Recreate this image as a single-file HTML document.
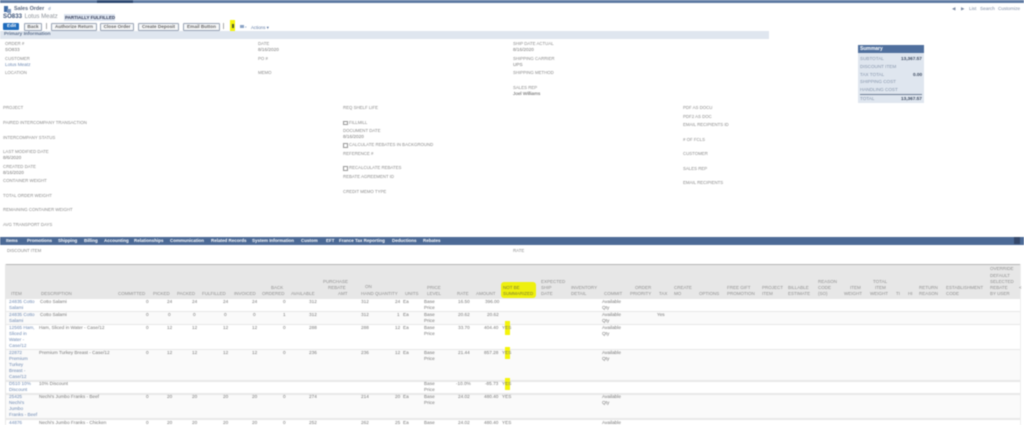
<!DOCTYPE html>
<html><head><meta charset="utf-8"><title>Sales Order</title>
<style>
html,body{margin:0;padding:0;background:#fff}
body{width:1024px;height:425px;overflow:hidden;position:relative;font-family:"Liberation Sans",sans-serif}
#w{position:absolute;left:0;top:0;width:1024px;height:425px;overflow:hidden;filter:blur(.4px)}
span{position:absolute;white-space:nowrap;font-size:4.35px;line-height:6px;color:#8a8a8a}
div.b{position:absolute}
.v{color:#777;font-size:4.7px}
.d{color:#555;font-size:4.7px}
.a{color:#6f8ab3;font-size:4.7px}
.t{color:#fff;font-weight:bold;top:238px;font-size:4.5px;text-decoration:none}
.h{color:#909090;font-size:4.5px}
.btn{position:absolute;top:23px;height:5.5px;border:.8px solid #98a3b5;border-radius:1px;background:#f6f7f8;color:#666;text-align:center;font-size:4.7px;line-height:5.5px;font-weight:bold}
.s{font-size:4.6px;color:#8796ac}
.sv{font-size:4.7px;color:#3d4a60;font-weight:bold}
.c{position:absolute;width:2.6px;height:2.6px;border:.5px solid #999;background:#fff}
</style></head><body><div id="w">
<div class="b" style="left:0;top:0;width:1024px;height:3px;background:#5f7ba3"></div>
<div class="b" style="left:97px;top:0;width:36px;height:3px;background:#2f4a73"></div>

<div class="b" style="left:4px;top:6px;width:4px;height:6px;background:#3f6ba5"></div>
<div class="b" style="left:7px;top:9px;width:4px;height:4px;background:#7c98bf"></div>
<span style="left:14px;top:6px;font-size:5.4px;font-weight:bold;color:#5a6880">Sales Order</span>
<span style="left:48px;top:5.5px;font-size:4.6px;color:#7d93b3">&#9740;</span>
<span style="left:3px;top:14px;font-size:6.1px;color:#3b5278;font-weight:bold">SO833</span>
<span style="left:24.5px;top:14px;font-size:6.1px;color:#8f949b">Lotus Meatz</span>
<div class="b" style="left:64px;top:14px;width:51px;height:7px;background:#dbe3ef"></div>
<span style="left:65px;top:14.5px;font-size:4.5px;font-weight:bold;color:#333a55">PARTIALLY FULFILLED</span>

<div class="b" style="left:3px;top:23px;width:16px;height:7px;background:#1f6cbd;border-radius:1px"></div>
<span style="left:7px;top:23.5px;font-size:4.8px;font-weight:bold;color:#fff">Edit</span>
<div class="btn" style="left:24px;width:16px">Back</div>
<div class="b" style="left:46px;top:23px;width:1px;height:6px;background:#aaa"></div>
<div class="btn" style="left:51px;width:44px">Authorize Return</div>
<div class="btn" style="left:100px;width:32px">Close Order</div>
<div class="btn" style="left:138px;width:39px">Create Deposit</div>
<div class="btn" style="left:183px;width:35px">Email Button</div>
<div class="b" style="left:223px;top:23px;width:1px;height:6px;background:#aaa"></div>
<div class="b" style="left:230px;top:20px;width:5px;height:11px;background:#f4f40a"></div>
<div class="b" style="left:231.5px;top:24px;width:2.5px;height:4px;background:#4a5a30"></div>
<div class="b" style="left:240px;top:25px;width:4px;height:3px;background:#8ba3c5"></div>
<span style="left:245px;top:24px;color:#8ba3c5;font-size:3px">&#9662;</span>
<span style="left:251px;top:24.5px;font-size:4.4px;color:#5f7aa5">Actions &#9662;</span>

<span style="left:952px;top:5.5px;color:#7b8aa3">&#9664;</span>
<span style="left:961px;top:5.5px;color:#7b8aa3">&#9654;</span>
<span style="left:969px;top:6px;color:#7b8aa3;font-size:4.7px">List</span>
<span style="left:980px;top:6px;color:#7b8aa3;font-size:4.7px">Search</span>
<span style="left:998px;top:6px;color:#7b8aa3;font-size:4.7px">Customize</span>

<div class="b" style="left:0;top:31px;width:769px;height:8px;background:#dfe6ef"></div>
<span style="left:4px;top:32px;font-size:4.9px;font-weight:bold;color:#5d6f8c">Primary Information</span>

<span style="left:5px;top:41px">ORDER #</span>
<span class="v" style="left:5px;top:47px">SO833</span>
<span style="left:5px;top:56px">CUSTOMER</span>
<span class="a" style="left:5px;top:62px">Lotus Meatz</span>
<span style="left:5px;top:70px">LOCATION</span>
<span style="left:258px;top:41px">DATE</span>
<span class="v" style="left:258px;top:47px">8/16/2020</span>
<span style="left:258px;top:56px">PO #</span>
<span style="left:258px;top:70px">MEMO</span>
<span style="left:513px;top:41px">SHIP DATE  ACTUAL</span>
<span class="v" style="left:513px;top:47px">8/16/2020</span>
<span style="left:513px;top:56px">SHIPPING CARRIER</span>
<span class="v" style="left:513px;top:62px">UPS</span>
<span style="left:513px;top:70px">SHIPPING METHOD</span>
<span style="left:513px;top:85px">SALES REP</span>
<span class="d" style="left:513px;top:91px">Joel Williams</span>

<div class="b" style="left:858px;top:45px;width:66px;height:8px;background:#4f6f9d"></div>
<div class="b" style="left:858px;top:53px;width:66px;height:50px;background:#dfe6ef"></div>
<div class="b" style="left:860px;top:94px;width:62px;height:1px;background:#6f7f96"></div>
<span style="left:860px;top:46px;font-size:5px;font-weight:bold;color:#fff">Summary</span>
<span class="s" style="left:860px;top:56px">SUBTOTAL</span>
<span class="sv" style="left:901px;top:56px">13,367.57</span>
<span class="s" style="left:860px;top:64px">DISCOUNT ITEM</span>
<span class="s" style="left:860px;top:72px">TAX TOTAL</span>
<span class="sv" style="left:913px;top:72px">0.00</span>
<span class="s" style="left:860px;top:79px">SHIPPING COST</span>
<span class="s" style="left:860px;top:87px">HANDLING COST</span>
<span class="s" style="left:860px;top:96px">TOTAL</span>
<span class="sv" style="left:901px;top:96px">13,367.57</span>

<span style="left:3px;top:105px">PROJECT</span>
<span style="left:3px;top:120px">PAIRED INTERCOMPANY TRANSACTION</span>
<span style="left:3px;top:134.5px">INTERCOMPANY STATUS</span>
<span style="left:3px;top:149px">LAST MODIFIED DATE</span>
<span class="v" style="left:3px;top:155px">8/6/2020</span>
<span style="left:3px;top:164px">CREATED DATE</span>
<span class="v" style="left:3px;top:170px">8/16/2020</span>
<span style="left:3px;top:178px">CONTAINER WEIGHT</span>
<span style="left:3px;top:193px">TOTAL ORDER WEIGHT</span>
<span style="left:3px;top:207px">REMAINING CONTAINER WEIGHT</span>
<span style="left:3px;top:221.5px">AVG TRANSPORT DAYS</span>

<span style="left:343px;top:105px">REQ SHELF LIFE</span>
<div class="c" style="left:343px;top:120.5px"></div>
<span style="left:349px;top:120px">FILLMILL</span>
<span style="left:343px;top:128px">DOCUMENT DATE</span>
<span class="v" style="left:343px;top:134px">8/16/2020</span>
<div class="c" style="left:343px;top:143px"></div>
<span style="left:349px;top:142px">CALCULATE REBATES IN BACKGROUND</span>
<span style="left:343px;top:151px">REFERENCE #</span>
<div class="c" style="left:343px;top:166px"></div>
<span style="left:349px;top:165px">RECALCULATE REBATES</span>
<span style="left:343px;top:174px">REBATE AGREEMENT ID</span>
<span style="left:343px;top:189px">CREDIT MEMO TYPE</span>

<span style="left:683px;top:105px">PDF AS DOCU</span>
<span style="left:683px;top:114px">PDF2 AS DOC</span>
<span style="left:683px;top:122px">EMAIL RECIPIENTS ID</span>
<span style="left:683px;top:137px"># OF FCLS</span>
<span style="left:683px;top:151px">CUSTOMER</span>
<span style="left:683px;top:165.5px">SALES REP</span>
<span style="left:683px;top:180px">EMAIL RECIPIENTS</span>

<div class="b" style="left:0;top:237px;width:1024px;height:7.5px;background:#4c6a96"></div>
<div class="b" style="left:1014px;top:237px;width:6px;height:7px;background:#35486a"></div>
<span class="t" style="left:6px">Items</span>
<span class="t" style="left:27px">Promotions</span>
<span class="t" style="left:58px">Shipping</span>
<span class="t" style="left:84px">Billing</span>
<span class="t" style="left:104px">Accounting</span>
<span class="t" style="left:134px">Relationships</span>
<span class="t" style="left:170px">Communication</span>
<span class="t" style="left:211px">Related Records</span>
<span class="t" style="left:252px">System Information</span>
<span class="t" style="left:301px">Custom</span>
<span class="t" style="left:326px">EFT</span>
<span class="t" style="left:339px">France Tax Reporting</span>
<span class="t" style="left:392px">Deductions</span>
<span class="t" style="left:423px">Rebates</span>

<span style="left:7px;top:248px">DISCOUNT ITEM</span>
<span style="left:513px;top:248px">RATE</span>

<div class="b" style="left:6px;top:264px;width:1014px;height:1.5px;background:#b5b5b5"></div>
<div class="b" style="left:6px;top:265px;width:1014px;height:34px;background:#e7e7e7"></div>
<div class="b" style="left:5px;top:264px;width:1px;height:161px;background:#e8e8e8"></div>
<div class="b" style="left:1020px;top:264px;width:1px;height:161px;background:#eee"></div>
<div class="b" style="left:6px;top:311px;width:1014px;height:1px;background:#e8e8e8"></div>
<div class="b" style="left:6px;top:312px;width:1014px;height:12px;background:#fafafa"></div>
<div class="b" style="left:6px;top:324px;width:1014px;height:1px;background:#e8e8e8"></div>
<div class="b" style="left:6px;top:349px;width:1014px;height:1px;background:#e8e8e8"></div>
<div class="b" style="left:6px;top:350px;width:1014px;height:30px;background:#fafafa"></div>
<div class="b" style="left:6px;top:380px;width:1014px;height:2px;background:#e8e8e8"></div>
<div class="b" style="left:6px;top:393px;width:1014px;height:2px;background:#e8e8e8"></div>
<div class="b" style="left:6px;top:395px;width:1014px;height:23px;background:#fafafa"></div>
<div class="b" style="left:6px;top:418px;width:1014px;height:2px;background:#e8e8e8"></div>

<div class="b" style="left:501px;top:282px;width:35px;height:16px;background:#eef00e;border-radius:3px"></div>
<div class="b" style="left:505px;top:321px;width:5px;height:14px;background:#f4f40a"></div>
<div class="b" style="left:505px;top:347px;width:5px;height:12px;background:#f4f40a"></div>
<div class="b" style="left:505px;top:378px;width:5px;height:12px;background:#f4f40a"></div>

<span class="h" style="left:11px;top:291px">ITEM</span>
<span class="h" style="left:41px;top:291px">DESCRIPTION</span>
<span class="h" style="left:118px;top:291px">COMMITTED</span>
<span class="h" style="left:153px;top:291px">PICKED</span>
<span class="h" style="left:177px;top:291px">PACKED</span>
<span class="h" style="left:202px;top:291px">FULFILLED</span>
<span class="h" style="left:234px;top:291px">INVOICED</span>
<span class="h" style="left:271px;top:285px">BACK</span>
<span class="h" style="left:262px;top:291px">ORDERED</span>
<span class="h" style="left:291px;top:291px">AVAILABLE</span>
<span class="h" style="left:323px;top:278.5px">PURCHASE</span>
<span class="h" style="left:328px;top:285px">REBATE</span>
<span class="h" style="left:338px;top:291px">AMT</span>
<span class="h" style="left:365px;top:284px">ON</span>
<span class="h" style="left:361px;top:291px">HAND</span>
<span class="h" style="left:375px;top:291px">QUANTITY</span>
<span class="h" style="left:405px;top:291px">UNITS</span>
<span class="h" style="left:427px;top:285px">PRICE</span>
<span class="h" style="left:427px;top:291px">LEVEL</span>
<span class="h" style="left:457px;top:291px">RATE</span>
<span class="h" style="left:476px;top:291px">AMOUNT</span>
<span class="h" style="left:503px;top:285px;color:#7d7d30">NOT BE</span>
<span class="h" style="left:503px;top:291px;color:#7d7d30">SUMMARIZED</span>
<span class="h" style="left:541px;top:278.5px">EXPECTED</span>
<span class="h" style="left:541px;top:285px">SHIP</span>
<span class="h" style="left:541px;top:291px">DATE</span>
<span class="h" style="left:571px;top:285px">INVENTORY</span>
<span class="h" style="left:571px;top:291px">DETAIL</span>
<span class="h" style="left:604px;top:291px">COMMIT</span>
<span class="h" style="left:635px;top:285px">ORDER</span>
<span class="h" style="left:630px;top:291px">PRIORITY</span>
<span class="h" style="left:659px;top:291px">TAX</span>
<span class="h" style="left:674px;top:285px">CREATE</span>
<span class="h" style="left:674px;top:291px">MO</span>
<span class="h" style="left:699px;top:291px">OPTIONS</span>
<span class="h" style="left:727px;top:285px">FREE GIFT</span>
<span class="h" style="left:727px;top:291px">PROMOTION</span>
<span class="h" style="left:762px;top:285px">PROJECT</span>
<span class="h" style="left:762px;top:291px">ITEM</span>
<span class="h" style="left:788px;top:285px">BILLABLE</span>
<span class="h" style="left:788px;top:291px">ESTIMATE</span>
<span class="h" style="left:818px;top:279px">REASON</span>
<span class="h" style="left:818px;top:285px">CODE</span>
<span class="h" style="left:818px;top:291px">(SO)</span>
<span class="h" style="left:850px;top:285px">ITEM</span>
<span class="h" style="left:844px;top:291px">WEIGHT</span>
<span class="h" style="left:873px;top:279px">TOTAL</span>
<span class="h" style="left:875px;top:285px">ITEM</span>
<span class="h" style="left:870px;top:291px">WEIGHT</span>
<span class="h" style="left:896px;top:291px">TI</span>
<span class="h" style="left:908px;top:291px">HI</span>
<span class="h" style="left:919px;top:285px">RETURN</span>
<span class="h" style="left:919px;top:291px">REASON</span>
<span class="h" style="left:946px;top:285px">ESTABLISHMENT</span>
<span class="h" style="left:946px;top:291px">CODE</span>
<span class="h" style="left:990px;top:266px">OVERRIDE</span>
<span class="h" style="left:990px;top:272.5px">DEFAULT</span>
<span class="h" style="left:990px;top:279px">SELECTED</span>
<span class="h" style="left:990px;top:285px">REBATE</span>
<span class="h" style="left:990px;top:291px">BY USER</span>
<span class="h" style="left:1019px;top:285px">&lt;</span>

<span class="a" style="left:9px;top:299px">24835 Cotto</span>
<span class="a" style="left:9px;top:305px">Salami</span>
<span class="v" style="left:40px;top:299px">Cotto Salami</span>
<span class="v" style="left:146px;top:299px">0</span>
<span class="v" style="left:167px;top:299px">24</span>
<span class="v" style="left:192px;top:299px">24</span>
<span class="v" style="left:223px;top:299px">24</span>
<span class="v" style="left:252px;top:299px">24</span>
<span class="v" style="left:283px;top:299px">0</span>
<span class="v" style="left:309px;top:299px">312</span>
<span class="v" style="left:361px;top:299px">312</span>
<span class="v" style="left:395px;top:299px">24</span>
<span class="v" style="left:403px;top:299px">Ea</span>
<span class="v" style="left:424px;top:299px">Base</span>
<span class="v" style="left:424px;top:305px">Price</span>
<span class="v" style="left:458px;top:299px">16.50</span>
<span class="v" style="left:485px;top:299px">396.00</span>
<span class="v" style="left:602px;top:299px">Available</span>
<span class="v" style="left:602px;top:305px">Qty</span>

<span class="a" style="left:9px;top:312px">24835 Cotto</span>
<span class="a" style="left:9px;top:318px">Salami</span>
<span class="v" style="left:40px;top:312px">Cotto Salami</span>
<span class="v" style="left:146px;top:312px">0</span>
<span class="v" style="left:168px;top:312px">0</span>
<span class="v" style="left:193px;top:312px">0</span>
<span class="v" style="left:224px;top:312px">0</span>
<span class="v" style="left:253px;top:312px">0</span>
<span class="v" style="left:283px;top:312px">1</span>
<span class="v" style="left:309px;top:312px">312</span>
<span class="v" style="left:361px;top:312px">312</span>
<span class="v" style="left:397px;top:312px">1</span>
<span class="v" style="left:403px;top:312px">Ea</span>
<span class="v" style="left:424px;top:312px">Base</span>
<span class="v" style="left:424px;top:318px">Price</span>
<span class="v" style="left:458px;top:312px">20.62</span>
<span class="v" style="left:487px;top:312px">20.62</span>
<span class="v" style="left:602px;top:312px">Available</span>
<span class="v" style="left:602px;top:318px">Qty</span>
<span class="v" style="left:657px;top:312px">Yes</span>

<span class="a" style="left:9px;top:325px">12565 Ham,</span>
<span class="a" style="left:9px;top:331px">Sliced in</span>
<span class="a" style="left:9px;top:337px">Water -</span>
<span class="a" style="left:9px;top:343px">Case/12</span>
<span class="v" style="left:39px;top:325px">Ham, Sliced in Water - Case/12</span>
<span class="v" style="left:146px;top:325px">0</span>
<span class="v" style="left:167px;top:325px">12</span>
<span class="v" style="left:192px;top:325px">12</span>
<span class="v" style="left:223px;top:325px">12</span>
<span class="v" style="left:252px;top:325px">12</span>
<span class="v" style="left:283px;top:325px">0</span>
<span class="v" style="left:309px;top:325px">288</span>
<span class="v" style="left:361px;top:325px">288</span>
<span class="v" style="left:395px;top:325px">12</span>
<span class="v" style="left:403px;top:325px">Ea</span>
<span class="v" style="left:424px;top:325px">Base</span>
<span class="v" style="left:424px;top:331px">Price</span>
<span class="v" style="left:458px;top:325px">33.70</span>
<span class="v" style="left:484px;top:325px">404.40</span>
<span class="v" style="left:502px;top:325px">YES</span>
<span class="v" style="left:602px;top:325px">Available</span>
<span class="v" style="left:602px;top:331px">Qty</span>

<span class="a" style="left:9px;top:350px">22872</span>
<span class="a" style="left:9px;top:356px">Premium</span>
<span class="a" style="left:9px;top:362px">Turkey</span>
<span class="a" style="left:9px;top:368px">Breast -</span>
<span class="a" style="left:9px;top:374px">Case/12</span>
<span class="v" style="left:39px;top:350px">Premium Turkey Breast - Case/12</span>
<span class="v" style="left:146px;top:350px">0</span>
<span class="v" style="left:167px;top:350px">12</span>
<span class="v" style="left:192px;top:350px">12</span>
<span class="v" style="left:223px;top:350px">12</span>
<span class="v" style="left:252px;top:350px">12</span>
<span class="v" style="left:283px;top:350px">0</span>
<span class="v" style="left:309px;top:350px">236</span>
<span class="v" style="left:361px;top:350px">236</span>
<span class="v" style="left:395px;top:350px">12</span>
<span class="v" style="left:403px;top:350px">Ea</span>
<span class="v" style="left:424px;top:350px">Base</span>
<span class="v" style="left:424px;top:356px">Price</span>
<span class="v" style="left:458px;top:350px">21.44</span>
<span class="v" style="left:484px;top:350px">857.28</span>
<span class="v" style="left:502px;top:350px">YES</span>
<span class="v" style="left:602px;top:350px">Available</span>
<span class="v" style="left:602px;top:356px">Qty</span>

<span class="a" style="left:9px;top:381px">D510 10%</span>
<span class="a" style="left:9px;top:387px">Discount</span>
<span class="v" style="left:39px;top:381px">10% Discount</span>
<span class="v" style="left:424px;top:381px">Base</span>
<span class="v" style="left:424px;top:387px">Price</span>
<span class="v" style="left:456px;top:381px">-10.0%</span>
<span class="v" style="left:485px;top:381px">-85.73</span>
<span class="v" style="left:502px;top:381px">YES</span>

<span class="a" style="left:9px;top:394px">25425</span>
<span class="a" style="left:9px;top:400px">Nechi's</span>
<span class="a" style="left:9px;top:406px">Jumbo</span>
<span class="a" style="left:9px;top:412px">Franks - Beef</span>
<span class="v" style="left:39px;top:394px">Nechi's Jumbo Franks - Beef</span>
<span class="v" style="left:146px;top:394px">0</span>
<span class="v" style="left:167px;top:394px">20</span>
<span class="v" style="left:192px;top:394px">20</span>
<span class="v" style="left:223px;top:394px">20</span>
<span class="v" style="left:252px;top:394px">20</span>
<span class="v" style="left:283px;top:394px">0</span>
<span class="v" style="left:309px;top:394px">274</span>
<span class="v" style="left:361px;top:394px">214</span>
<span class="v" style="left:395px;top:394px">20</span>
<span class="v" style="left:403px;top:394px">Ea</span>
<span class="v" style="left:424px;top:394px">Base</span>
<span class="v" style="left:424px;top:400px">Price</span>
<span class="v" style="left:458px;top:394px">24.02</span>
<span class="v" style="left:484px;top:394px">480.40</span>
<span class="v" style="left:502px;top:394px">YES</span>
<span class="v" style="left:602px;top:394px">Available</span>
<span class="v" style="left:602px;top:400px">Qty</span>

<span class="a" style="left:9px;top:420px">44876</span>
<span class="v" style="left:39px;top:420px">Nechi's Jumbo Franks - Chicken</span>
<span class="v" style="left:146px;top:420px">0</span>
<span class="v" style="left:167px;top:420px">20</span>
<span class="v" style="left:192px;top:420px">20</span>
<span class="v" style="left:223px;top:420px">20</span>
<span class="v" style="left:252px;top:420px">20</span>
<span class="v" style="left:283px;top:420px">0</span>
<span class="v" style="left:309px;top:420px">252</span>
<span class="v" style="left:361px;top:420px">262</span>
<span class="v" style="left:395px;top:420px">25</span>
<span class="v" style="left:403px;top:420px">Ea</span>
<span class="v" style="left:424px;top:420px">Base</span>
<span class="v" style="left:458px;top:420px">24.02</span>
<span class="v" style="left:484px;top:420px">480.40</span>
<span class="v" style="left:502px;top:420px">YES</span>
<span class="v" style="left:602px;top:420px">Available</span>
</div></body></html>
